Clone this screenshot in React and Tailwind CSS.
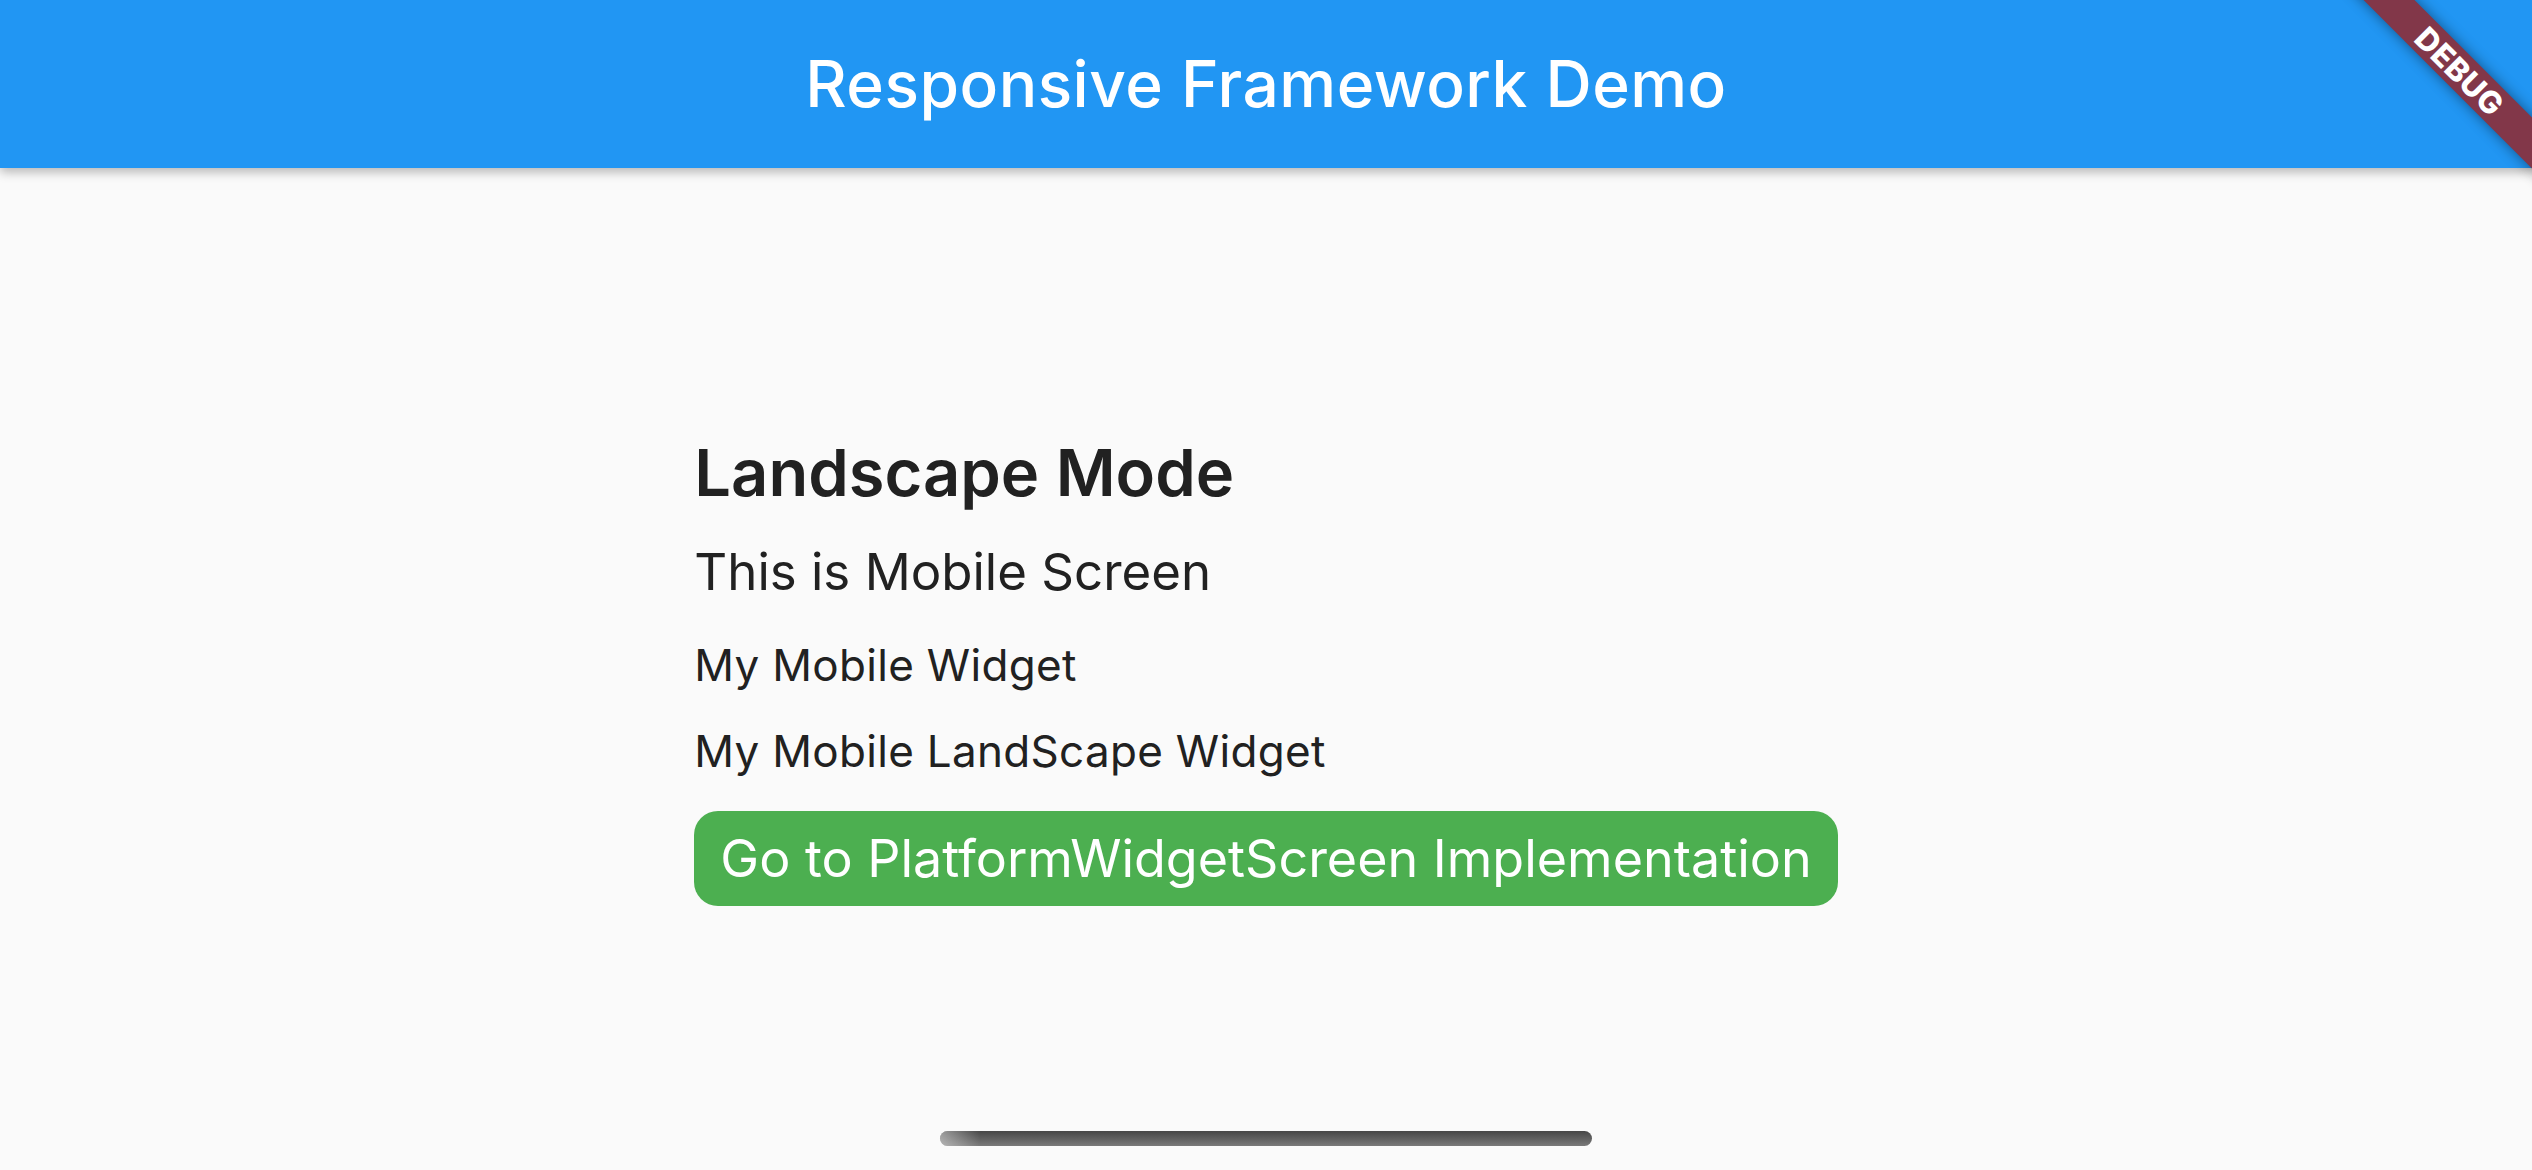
import React from 'react';

const font = { fontFamily: 'Inter, "Noto Sans", sans-serif' };

const DebugBanner = () => (
  <div className="absolute z-20 top-0 right-0 w-[200px] h-[200px] overflow-hidden pointer-events-none">
    <div className="absolute left-[-22px] top-[53px] w-[300px] h-[36px] rotate-45 bg-[#823749] shadow-[0_0_14px_rgba(0,0,0,0.45)] flex items-center justify-center">
      <span className="text-white text-[31px] font-extrabold leading-none tracking-[0.5px]">DEBUG</span>
    </div>
  </div>
);

const HomeIndicator = () => (
  <div className="absolute bottom-[24px] left-1/2 -translate-x-1/2 w-[652px] h-[15px] rounded-full overflow-hidden bg-gradient-to-b from-[#474747] to-[#7a7a7a]">
    <div className="absolute left-0 top-0 h-full w-[40px] bg-gradient-to-r from-[rgba(255,255,255,0.45)] to-transparent" />
  </div>
);

const App = () => {
  return (
    <div className="relative w-[2532px] h-[1170px] overflow-hidden bg-[#fafafa] flex flex-col" style={font}>
      <header className="relative z-10 h-[168px] shrink-0 bg-[#2196f3] shadow-[0_4px_10px_rgba(0,0,0,0.28)] flex items-center justify-center">
        <h1 className="text-white text-[64px] leading-none font-medium tracking-[0.5px]">Responsive Framework Demo</h1>
      </header>

      <main className="flex-1 flex items-center justify-center pt-[8px]">
        <div className="flex flex-col items-start text-[#212121]">
          <h2 className="text-[65px] leading-none font-semibold">Landscape Mode</h2>
          <p className="mt-[41px] text-[51px] leading-none">This is Mobile Screen</p>
          <p className="mt-[46px] text-[44px] leading-none tracking-[0.3px]">My Mobile Widget</p>
          <p className="mt-[42px] text-[44px] leading-none tracking-[0.3px]">My Mobile LandScape Widget</p>
          <button className="mt-[38px] h-[95px] px-[26px] rounded-[24px] bg-[#4caf50] text-white text-[52px] leading-none flex items-center">
            Go to PlatformWidgetScreen Implementation
          </button>
        </div>
      </main>

      <HomeIndicator />
      <DebugBanner />
    </div>
  );
};

export default App;
